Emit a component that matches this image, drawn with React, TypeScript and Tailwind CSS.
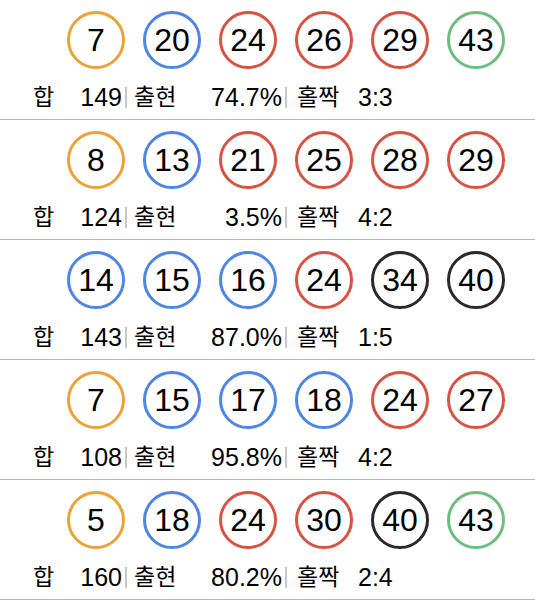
const rows: { nums: number[]; sum: number; rate: string; oddEven: string }[] = [
  { nums: [7, 20, 24, 26, 29, 43], sum: 149, rate: "74.7%", oddEven: "3:3" },
  { nums: [8, 13, 21, 25, 28, 29], sum: 124, rate: "3.5%", oddEven: "4:2" },
  { nums: [14, 15, 16, 24, 34, 40], sum: 143, rate: "87.0%", oddEven: "1:5" },
  { nums: [7, 15, 17, 18, 24, 27], sum: 108, rate: "95.8%", oddEven: "4:2" },
  { nums: [5, 18, 24, 30, 40, 43], sum: 160, rate: "80.2%", oddEven: "2:4" },
];

function ballColor(n: number): string {
  if (n <= 10) return "border-[#eba23a]";
  if (n <= 20) return "border-[#4f86e4]";
  if (n <= 30) return "border-[#d45545]";
  if (n <= 40) return "border-[#2a2a2a]";
  return "border-[#6dbe7e]";
}

function Ball({ n }: { n: number }) {
  return (
    <div
      className={`w-[58px] h-[58px] rounded-full border-[3px] flex items-center justify-center text-[32px] text-black ${ballColor(n)}`}
    >
      {n}
    </div>
  );
}

function Divider() {
  return <div className="w-[2px] h-[21px] bg-[#c8c8c8]" />;
}

export default function App() {
  return (
    <div
      className="w-[535px] bg-white text-black"
      style={{ fontFamily: '"Liberation Sans", "Noto Sans CJK KR", sans-serif' }}
    >
      {rows.map((row, i) => (
        <div key={i} className="h-[120px] border-b border-[#b8b8b8]">
          <div className="flex gap-[18px] pl-[67px] pt-[11px]">
            {row.nums.map((n) => (
              <Ball key={n} n={n} />
            ))}
          </div>
          <div className="flex items-center mt-[14px] pl-[33px] h-[28px] text-[25px] leading-[28px]">
            <span className="w-[42px] text-[23px]">합</span>
            <span className="w-[47px] text-right">{row.sum}</span>
            <div className="ml-[3px]">
              <Divider />
            </div>
            <div className="ml-[7px] w-[148px] flex justify-between items-center">
              <span className="text-[23px]">출현</span>
              <span>{row.rate}</span>
            </div>
            <div className="ml-[3px]">
              <Divider />
            </div>
            <span className="ml-[10px] w-[61px] text-[23px]">홀짝</span>
            <span>{row.oddEven}</span>
          </div>
        </div>
      ))}
    </div>
  );
}
